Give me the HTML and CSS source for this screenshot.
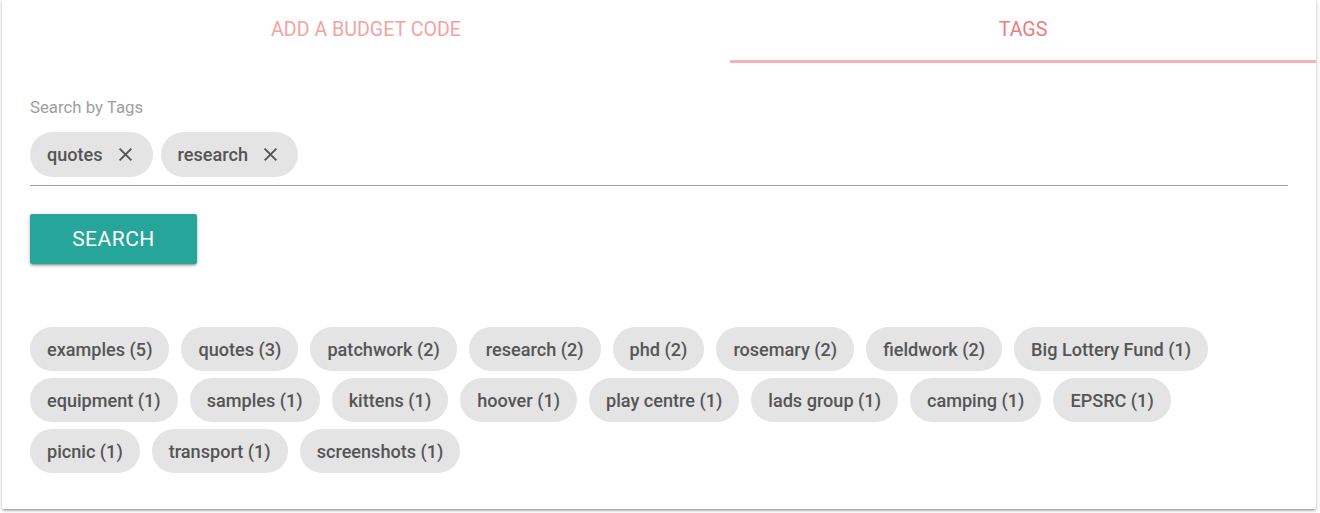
FILE: index.html
```html
<!DOCTYPE html>
<html>
<head>
<meta charset="utf-8">
<link rel="stylesheet" href="styles.css">
</head>
<body>
<div class="card">
  <div class="tabs">
    <div class="tab">Add a budget code</div>
    <div class="tab active">Tags</div>
  </div>
  <div class="content">
    <div class="label">Search by Tags</div>
    <div class="chip-input">
      <span class="chip">quotes <svg class="close" viewBox="0 0 14 14"><path d="M1.5 1.5 L12.5 12.5 M12.5 1.5 L1.5 12.5"/></svg></span>
      <span class="chip">research <svg class="close" viewBox="0 0 14 14"><path d="M1.5 1.5 L12.5 12.5 M12.5 1.5 L1.5 12.5"/></svg></span>
    </div>
    <button class="btn">Search</button>
    <div class="tag-list">
      <span class="chip">examples (5)</span>
      <span class="chip">quotes (3)</span>
      <span class="chip">patchwork (2)</span>
      <span class="chip">research (2)</span>
      <span class="chip">phd (2)</span>
      <span class="chip">rosemary (2)</span>
      <span class="chip">fieldwork (2)</span>
      <span class="chip">Big Lottery Fund (1)</span>
      <span class="chip">equipment (1)</span>
      <span class="chip">samples (1)</span>
      <span class="chip">kittens (1)</span>
      <span class="chip">hoover (1)</span>
      <span class="chip">play centre (1)</span>
      <span class="chip">lads group (1)</span>
      <span class="chip">camping (1)</span>
      <span class="chip">EPSRC (1)</span>
      <span class="chip">picnic (1)</span>
      <span class="chip">transport (1)</span>
      <span class="chip">screenshots (1)</span>
    </div>
  </div>
</div>
</body>
</html>
```

FILE: styles.css
```css
* { box-sizing: border-box; }
html, body { margin: 0; background: #fff; }
body {
  padding: 0 4px 4px 2px;
  font-family: Roboto, "Liberation Sans", sans-serif;
}
.card {
  width: 1314px;
  height: 509px;
  background: #fff;
  border-radius: 0 0 2px 2px;
  box-shadow: 0 2px 2px 0 rgba(0,0,0,0.14), 0 3px 1px -2px rgba(0,0,0,0.12), 0 1px 5px 0 rgba(0,0,0,0.2);
}
.tabs {
  display: grid;
  grid-template-columns: 728px 1fr;
  height: 63px;
}
.tab {
  display: flex;
  align-items: center;
  justify-content: center;
  padding-bottom: 2px;
  text-transform: uppercase;
  font-size: 19.6px;
  color: #f4a3a3;
  border-bottom: 3px solid transparent;
}
.tab.active {
  color: #ef7a82;
  border-bottom-color: #f8b1b4;
}
.content {
  padding: 34px 28px 0 28px;
}
.label {
  font-size: 16.8px;
  color: #9e9e9e;
  line-height: 20px;
}
.chip-input {
  display: flex;
  gap: 8px;
  margin-top: 15px;
  padding-bottom: 8px;
  border-bottom: 1px solid #9e9e9e;
}
.chip {
  display: inline-flex;
  align-items: center;
  height: 45px;
  padding: 0 17px;
  border-radius: 23px;
  background: #e4e4e4;
  color: #555;
  font-size: 18.1px;
  font-weight: 500;
  white-space: nowrap;
}
.close {
  width: 15px;
  height: 15px;
  margin-left: 15px;
  margin-right: 3px;
  fill: none;
  stroke: #555;
  stroke-width: 1.8;
}
.btn {
  display: block;
  margin-top: 28px;
  width: 167px;
  height: 50px;
  border: none;
  border-radius: 2px;
  background: #26a69a;
  color: #fff;
  font-family: inherit;
  font-size: 21px;
  letter-spacing: 0.5px;
  text-transform: uppercase;
  box-shadow: 0 2px 2px 0 rgba(0,0,0,0.14), 0 3px 1px -2px rgba(0,0,0,0.12), 0 1px 5px 0 rgba(0,0,0,0.2);
}
.tag-list {
  display: flex;
  flex-wrap: wrap;
  gap: 7px 12px;
  margin-top: 63px;
  width: 1200px;
}
.tag-list .chip {
  height: 44px;
}
```
